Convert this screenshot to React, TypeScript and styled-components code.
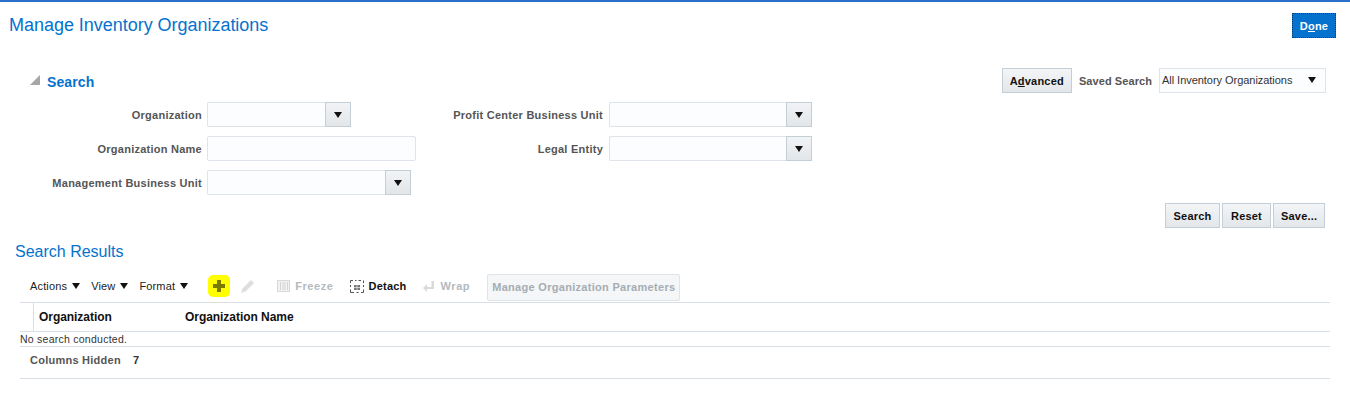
import React from "react";
import styled, { createGlobalStyle } from "styled-components";

const GlobalStyle = createGlobalStyle`
    html, body {
        margin: 0;
        padding: 0;
        background: #fff;
    }

    body {
        font-family: "Liberation Sans", Arial, sans-serif;
        font-size: 11px;
        color: #333;
    }
`;

const Arrow = styled.span`
    display: inline-block;
    width: 0;
    height: 0;
    border-left: 4px solid transparent;
    border-right: 4px solid transparent;
    border-top: 6px solid #111;
`;

const Combo = ({ width }: { width: number }) => (
    <ComboBox $width={width}>
        <ComboInput />
        <ComboButton>
            <Arrow />
        </ComboButton>
    </ComboBox>
);

const SearchForm = () => (
    <Form.Container>
        <Form.Column>
            <Form.Row>
                <Form.Label $width={172}>Organization</Form.Label>
                <Combo width={144} />
            </Form.Row>
            <Form.Row>
                <Form.Label $width={172}>Organization Name</Form.Label>
                <TextInput />
            </Form.Row>
            <Form.Row>
                <Form.Label $width={172}>Management Business Unit</Form.Label>
                <Combo width={204} />
            </Form.Row>
        </Form.Column>
        <Form.Column $second>
            <Form.Row $second>
                <Form.Label $width={166}>Profit Center Business Unit</Form.Label>
                <Combo width={203} />
            </Form.Row>
            <Form.Row $second>
                <Form.Label $width={166}>Legal Entity</Form.Label>
                <Combo width={203} />
            </Form.Row>
        </Form.Column>
    </Form.Container>
);

const Toolbar = () => (
    <Tools.Bar>
        <Tools.Menu>Actions <Arrow /></Tools.Menu>
        <Tools.Menu>View <Arrow /></Tools.Menu>
        <Tools.Menu>Format <Arrow /></Tools.Menu>
        <Tools.AddIcon>
            <svg width="12" height="12" viewBox="0 0 12 12">
                <path d="M4 0h4v4h4v4H8v4H4V8H0V4h4z" fill="#7a7a00" />
            </svg>
        </Tools.AddIcon>
        <Tools.EditIcon>
            <svg width="15" height="15" viewBox="0 0 15 15">
                <path d="M11 1l3 3-8.500 8.500-4.500 1.500 1.500-4.500z" fill="#dedede" />
            </svg>
        </Tools.EditIcon>
        <Tools.Item $disabled>
            <svg width="13" height="12" viewBox="0 0 13 12">
                <rect x="0.500" y="0.500" width="12" height="11" fill="#f2f2f2" stroke="#d8d8d8" />
                <path d="M3.500 2v8M6 2v8M8 2v8M10.500 2v8" stroke="#d4d4d4" />
            </svg>
            Freeze
        </Tools.Item>
        <Tools.Item>
            <svg width="14" height="13" viewBox="0 0 14 13">
                <path d="M0.500 3V0.500H3M5 0.500h1.500M8.500 0.500H11M13.500 0.500V3M13.500 5v2M13.500 9.500v3H11M8.500 12.500h-2M4 12.500H0.500V9.500M0.500 7V5" fill="none" stroke="#555" />
                <rect x="4" y="5" width="6" height="5" fill="#777" />
                <path d="M4 7.500h6M7 5v5" stroke="#fff" strokeWidth="0.6" />
            </svg>
            Detach
        </Tools.Item>
        <Tools.Item $disabled>
            <svg width="13" height="13" viewBox="0 0 13 13">
                <path d="M9.500 1h2.500v8H5v3L1 8l4-4v3h4.500z" fill="#dadada" />
            </svg>
            Wrap
        </Tools.Item>
        <Tools.DisabledButton>Manage Organization Parameters</Tools.DisabledButton>
    </Tools.Bar>
);

const App = () => (
    <Page>
        <GlobalStyle />
        <Header>
            <Title>Manage Inventory Organizations</Title>
            <DoneButton>D<u>o</u>ne</DoneButton>
        </Header>

        <Search.Section>
            <Search.Head>
                <Search.Heading>
                    <Search.Disclosure />
                    <Search.HeadingText>Search</Search.HeadingText>
                </Search.Heading>
                <Search.Saved>
                    <Button>A<u>d</u>vanced</Button>
                    <Search.SavedLabel>Saved Search</Search.SavedLabel>
                    <Search.SavedSelect>
                        All Inventory Organizations
                        <Arrow />
                    </Search.SavedSelect>
                </Search.Saved>
            </Search.Head>
            <SearchForm />
            <Search.Actions>
                <Button $width={55}>Search</Button>
                <Button $width={49}>Reset</Button>
                <Button $width={52}>Save...</Button>
            </Search.Actions>
        </Search.Section>

        <Results.Section>
            <Results.Title>Search Results</Results.Title>
            <Results.Panel>
                <Toolbar />
                <Results.HeaderRow>
                    <Results.Gutter />
                    <Results.Column $width={141}>Organization</Results.Column>
                    <Results.Column>Organization Name</Results.Column>
                </Results.HeaderRow>
                <Results.Empty>No search conducted.</Results.Empty>
                <Results.Footer>
                    Columns Hidden
                    <Results.Count>7</Results.Count>
                </Results.Footer>
            </Results.Panel>
        </Results.Section>
    </Page>
);

export default App;

const Page = styled.div`
    width: 1350px;
    height: 400px;
    box-sizing: border-box;
    border-top: 2px solid #2a6fc9;
    overflow: hidden;
`;

const Header = styled.header`
    display: flex;
    justify-content: space-between;
    align-items: flex-start;

    padding: 11px 14px 0 9px;
    height: 41px;
`;

const Title = styled.h1`
    margin: 2px 0 0;

    font-size: 18px;
    font-weight: 400;
    line-height: 20px;
    letter-spacing: -0.03px;
    color: #0572ce;
`;

const DoneButton = styled.button`
    width: 44px;
    height: 25px;
    padding: 0;

    font: bold 11px "Liberation Sans", Arial, sans-serif;
    letter-spacing: 0.2px;
    color: #fff;

    background: #0572ce;
    border: 1px dotted #123c66;
`;

const Button = styled.button<{ $width?: number }>`
    height: 25px;
    width: ${(props) => (props.$width ? `${props.$width}px` : "auto")};
    padding: 0 7px;

    font: bold 11px "Liberation Sans", Arial, sans-serif;
    letter-spacing: 0.2px;
    color: #111;

    background: linear-gradient(#f3f5f7, #e3e7ea);
    border: 1px solid #c4ced7;
`;

const ComboBox = styled.div<{ $width: number }>`
    display: flex;
    width: ${(props) => props.$width}px;
    height: 25px;
`;

const ComboInput = styled.div`
    flex: 1;

    background: #fbfdfe;
    border: 1px solid #dfe4ea;
    border-right: none;
    border-radius: 2px 0 0 2px;
`;

const ComboButton = styled.div`
    width: 24px;

    display: flex;
    align-items: center;
    justify-content: center;

    background: linear-gradient(#f1f3f5, #e2e6e9);
    border: 1px solid #c4ced7;
`;

const TextInput = styled.div`
    width: 209px;
    height: 25px;
    box-sizing: border-box;

    background: #fbfdfe;
    border: 1px solid #dfe4ea;
    border-radius: 2px;
`;

const Search = {
    Section: styled.section`
        padding: 0 24px 0 30px;
    `,

    Head: styled.div`
        display: flex;
        justify-content: space-between;
        align-items: center;

        height: 25px;
        margin-top: 14px;
    `,

    Heading: styled.div`
        display: flex;
        align-items: center;
        gap: 7px;

        padding-top: 3px;
    `,

    Disclosure: styled.span`
        width: 0;
        height: 0;
        margin-top: -5px;

        border-left: 10px solid transparent;
        border-bottom: 10px solid #a4a6a8;
    `,

    HeadingText: styled.h2`
        margin: 0;

        font-size: 14px;
        font-weight: 700;
        letter-spacing: 0.1px;
        color: #0572ce;
    `,

    Saved: styled.div`
        display: flex;
        align-items: center;
    `,

    SavedLabel: styled.span`
        margin: 0 7px;

        font-weight: 700;
        letter-spacing: 0.08px;
        color: #555;
    `,

    SavedSelect: styled.div`
        width: 167px;
        height: 25px;
        box-sizing: border-box;
        padding: 0 9px 2px 2px;

        display: flex;
        align-items: center;
        justify-content: space-between;

        font-size: 11px;
        letter-spacing: -0.04px;
        color: #333;

        background: #fbfdfe;
        border: 1px solid #dfe4ea;
    `,

    Actions: styled.div`
        display: flex;
        justify-content: flex-end;
        gap: 2px;

        margin: 7px 1px 0 0;
    `,
};

const Form = {
    Container: styled.div`
        display: flex;

        margin-top: 9px;
        height: 94px;
    `,

    Column: styled.div<{ $second?: boolean }>`
        display: flex;
        flex-direction: column;
        gap: 9px;

        margin-left: ${(props) => (props.$second ? "14px" : "0")};
        width: ${(props) => (props.$second ? "auto" : "393px")};
    `,

    Row: styled.div<{ $second?: boolean }>`
        display: flex;
        align-items: center;
        gap: ${(props) => (props.$second ? "6px" : "5px")};
    `,

    Label: styled.label<{ $width: number }>`
        width: ${(props) => props.$width}px;

        text-align: right;
        white-space: nowrap;

        font-weight: 700;
        letter-spacing: 0.25px;
        color: #555;
    `,
};

const Results = {
    Section: styled.section`
        padding: 0 20px 0 15px;
    `,

    Title: styled.h2`
        margin: 14px 0 0;

        font-size: 16px;
        font-weight: 400;
        line-height: 20px;
        color: #0572ce;
    `,

    Panel: styled.div`
        margin: 10px 0 0 5px;
    `,

    HeaderRow: styled.div`
        display: flex;
        align-items: center;

        height: 28px;
        border-bottom: 1px solid #d8dfe6;

        font-size: 12px;
        font-weight: 700;
        letter-spacing: -0.05px;
        color: #111;
    `,

    Gutter: styled.div`
        width: 13px;
        height: 100%;
        border-right: 1px solid #d8dfe6;
    `,

    Column: styled.div<{ $width?: number }>`
        width: ${(props) => (props.$width ? `${props.$width}px` : "auto")};
        padding-left: 5px;
    `,

    Empty: styled.div`
        height: 14px;
        line-height: 14px;

        font-size: 10.5px;
        letter-spacing: 0.25px;
        color: #333;

        border-bottom: 1px solid #d8dfe6;
    `,

    Footer: styled.div`
        display: flex;
        align-items: center;

        height: 32px;
        padding: 0 0 6px 10px;
        box-sizing: border-box;

        font-weight: 700;
        letter-spacing: 0.25px;
        color: #555;

        border-bottom: 1px solid #d8dfe6;
    `,

    Count: styled.span`
        margin-left: 12px;
        color: #333;
    `,
};

const Tools = {
    Bar: styled.div`
        display: flex;
        align-items: center;

        height: 28px;
        padding: 0 0 2px 10px;
        border-bottom: 1px solid #d8dfe6;
    `,

    Menu: styled.span`
        display: flex;
        align-items: center;
        gap: 5px;

        margin-right: 11px;

        font-size: 11px;
        letter-spacing: 0.15px;
        color: #222;
    `,

    AddIcon: styled.span`
        width: 22px;
        height: 22px;
        margin: 0 10px 0 9px;

        display: flex;
        align-items: center;
        justify-content: center;

        background: #ffff00;
        border-radius: 5px;
    `,

    EditIcon: styled.span`
        display: flex;
        margin-right: 22px;
    `,

    Item: styled.span<{ $disabled?: boolean }>`
        display: flex;
        align-items: center;
        gap: 5px;

        margin-right: 16px;

        font-weight: 700;
        letter-spacing: ${(props) => (props.$disabled ? "0.6px" : "0.2px")};
        color: ${(props) => (props.$disabled ? "#b4babf" : "#111")};
    `,

    DisabledButton: styled.div`
        height: 25px;
        line-height: 25px;
        padding: 0 4px;
        margin: 2px 0 0 1px;

        font-weight: 700;
        letter-spacing: 0.3px;
        color: #a6adb3;

        background: #f4f6f7;
        border: 1px solid #dfe4e8;
        border-radius: 2px;
    `,
};
